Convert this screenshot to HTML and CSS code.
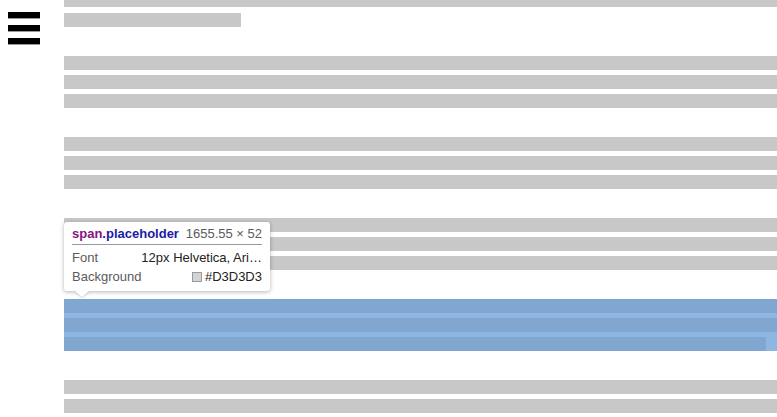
FILE: index.html
```html
<!DOCTYPE html>
<html>
<head>
<meta charset="utf-8">
<link rel="stylesheet" href="styles.css">
</head>
<body>
<div class="page">
  <nav class="nav">
    <div class="burger"><span></span><span></span><span></span></div>
  </nav>
  <main class="content">
    <div class="para first"><div class="bar"></div><div class="bar short"></div></div>
    <div class="para"><div class="bar"></div><div class="bar"></div><div class="bar"></div></div>
    <div class="para"><div class="bar"></div><div class="bar"></div><div class="bar"></div></div>
    <div class="para"><div class="bar"></div><div class="bar"></div><div class="bar"></div></div>
    <div class="para hl"><div class="bar"></div><div class="bar"></div><div class="bar last"></div></div>
    <div class="para"><div class="bar"></div><div class="bar"></div><div class="bar"></div></div>
  </main>
</div>
<div class="tip">
  <div class="tip-head">
    <span class="sel"><span class="tag">span</span><span class="cls">.placeholder</span></span>
    <span class="dim">1655.55 × 52</span>
  </div>
  <div class="tip-row"><span class="lbl">Font</span><span class="val">12px Helvetica, Ari…</span></div>
  <div class="tip-row"><span class="lbl">Background</span><span class="val"><i class="swatch"></i>#D3D3D3</span></div>
  <div class="arrow"></div>
</div>
</body>
</html>
```
FILE: styles.css
```css
html, body {
  margin: 0;
  padding: 0;
  background: #fff;
  overflow: hidden;
  width: 777px;
  height: 417px;
}
.page {
  display: flex;
  align-items: flex-start;
}
.nav {
  width: 64px;
  flex: none;
  box-sizing: border-box;
  padding: 12px 8px;
}
.burger {
  display: flex;
  flex-direction: column;
  gap: 7px;
  width: 32px;
}
.burger span {
  display: block;
  height: 6px;
  background: #000;
  box-shadow: 0 1px 0 #999;
}
.content {
  width: 1656px;
  flex: none;
  margin-top: -7px;
  display: flex;
  flex-direction: column;
  gap: 29px;
}
.para {
  display: flex;
  flex-direction: column;
  gap: 5px;
}
.para.first { gap: 6px; }
.bar {
  height: 14px;
  background: #c8c8c8;
}
.bar.short { width: 177px; }
.para.hl { background: #8eb6e3; }
.para.hl .bar { background: #81a7d0; }
.para.hl .bar.last { width: 702px; }

.tip {
  position: absolute;
  left: 64px;
  top: 222px;
  width: 206px;
  height: 69px;
  box-sizing: border-box;
  padding: 4px 8px 5px;
  background: #fff;
  border-radius: 3px;
  box-shadow: 0 1px 4px rgba(0,0,0,0.3);
  font-family: "Liberation Sans", Arial, sans-serif;
  font-size: 13px;
}
.tip-head {
  display: flex;
  justify-content: space-between;
  line-height: 16px;
  padding-bottom: 2px;
  border-bottom: 1px solid #9a9a9a;
}
.sel { font-weight: bold; }
.tag { color: #881280; }
.cls { color: #1a1aa6; }
.dim { color: #5a5a5a; }
.tip-row {
  display: flex;
  justify-content: space-between;
  line-height: 19px;
}
.tip-head + .tip-row { margin-top: 3px; }
.lbl { color: #5a5a5a; }
.val { color: #222; display: flex; align-items: center; }
.swatch {
  display: inline-block;
  width: 8px;
  height: 8px;
  background: #d3d3d3;
  border: 1px solid #9a9a9a;
  margin-right: 3px;
}
.arrow {
  position: absolute;
  left: 11px;
  bottom: -6px;
  width: 0;
  height: 0;
  border-left: 7px solid transparent;
  border-right: 7px solid transparent;
  border-top: 6px solid #fff;
  filter: drop-shadow(0 1px 1px rgba(0,0,0,0.2));
}
```
